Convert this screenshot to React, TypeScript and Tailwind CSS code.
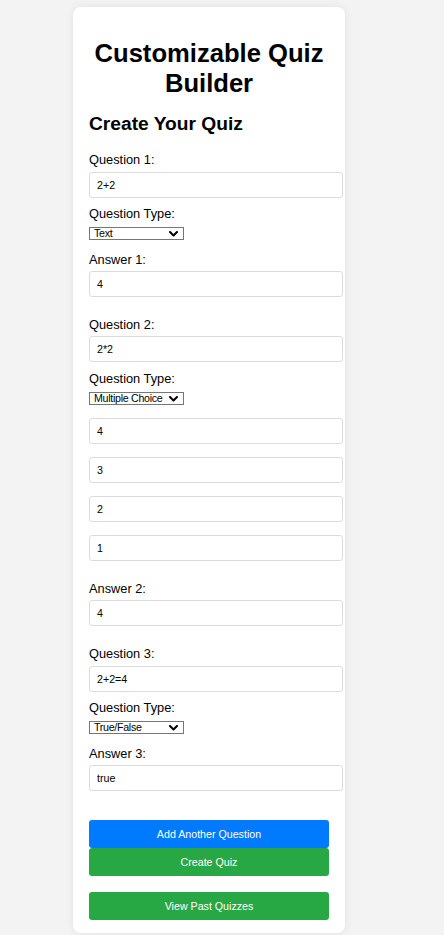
import React from "react";

const font = { fontFamily: '"Liberation Sans", Arial, sans-serif' };

const Label = ({ text, mt }: { text: string; mt: string }) => (
  <div className={`${mt} text-[12.8px] leading-[15px] text-black`}>{text}</div>
);

const Input = ({ value, mt }: { value: string; mt: string }) => (
  <input
    readOnly
    value={value}
    className={`${mt} block h-[26px] w-[254px] rounded-[3px] border border-[#dcdcdc] bg-white pl-[7px] text-[10.67px] text-black outline-none`}
  />
);

const Select = ({ value }: { value: string }) => (
  <div className="relative mt-[6px] h-[13px] w-[95px]">
    <div className="flex h-[13px] w-[95px] items-center overflow-hidden border border-[#767676] bg-white pl-[4px] text-[10.67px] leading-[11px] tracking-[-0.3px] whitespace-nowrap text-black">
      {value}
    </div>
    <svg
      className="absolute right-[6px] top-[4px]"
      width="9"
      height="6"
      viewBox="0 0 9 6"
      fill="none"
    >
      <polyline
        points="1,1 4.5,4.5 8,1"
        stroke="#000"
        strokeWidth="2"
        strokeLinecap="round"
        strokeLinejoin="round"
      />
    </svg>
  </div>
);

const Button = ({
  text,
  color,
  mt,
}: {
  text: string;
  color: string;
  mt: string;
}) => (
  <button
    type="button"
    className={`${mt} ${color} flex h-[28px] w-[240px] items-center justify-center rounded-[3px] text-[10.67px] text-white`}
  >
    {text}
  </button>
);

export default function App() {
  return (
    <div className="min-h-[935px] bg-[#f3f3f3] pt-[7px] pb-[10px]" style={font}>
      <div className="ml-[73px] w-[272px] rounded-[8px] bg-white px-4 pt-4 pb-[13px] shadow-[0_0_8px_rgba(0,0,0,0.08)]">
        <h1 className="mt-[16.4px] text-center text-[25.6px] leading-[29.4px] font-bold text-black">
          Customizable Quiz Builder
        </h1>
        <h2 className="mt-[15px] text-[19.2px] leading-[22px] font-bold text-black">
          Create Your Quiz
        </h2>

        {/* question 1 */}
        <Label text="Question 1:" mt="mt-[17px]" />
        <Input value="2+2" mt="mt-[4.3px]" />
        <Label text="Question Type:" mt="mt-[8.3px]" />
        <Select value="Text" />
        <Label text="Answer 1:" mt="mt-[12px]" />
        <Input value="4" mt="mt-[4.3px]" />

        {/* question 2 */}
        <Label text="Question 2:" mt="mt-[20px]" />
        <Input value="2*2" mt="mt-[4.3px]" />
        <Label text="Question Type:" mt="mt-[8.3px]" />
        <Select value="Multiple Choice" />
        <Input value="4" mt="mt-[13px]" />
        <Input value="3" mt="mt-[13px]" />
        <Input value="2" mt="mt-[13px]" />
        <Input value="1" mt="mt-[13px]" />
        <Label text="Answer 2:" mt="mt-[20.3px]" />
        <Input value="4" mt="mt-[4.3px]" />

        {/* question 3 */}
        <Label text="Question 3:" mt="mt-[20px]" />
        <Input value="2+2=4" mt="mt-[4.3px]" />
        <Label text="Question Type:" mt="mt-[8.3px]" />
        <Select value="True/False" />
        <Label text="Answer 3:" mt="mt-[12px]" />
        <Input value="true" mt="mt-[4.3px]" />

        <Button text="Add Another Question" color="bg-[#007bff]" mt="mt-[28.8px]" />
        <Button text="Create Quiz" color="bg-[#28a745]" mt="mt-0" />
        <Button text="View Past Quizzes" color="bg-[#28a745]" mt="mt-[16px]" />
      </div>
    </div>
  );
}
